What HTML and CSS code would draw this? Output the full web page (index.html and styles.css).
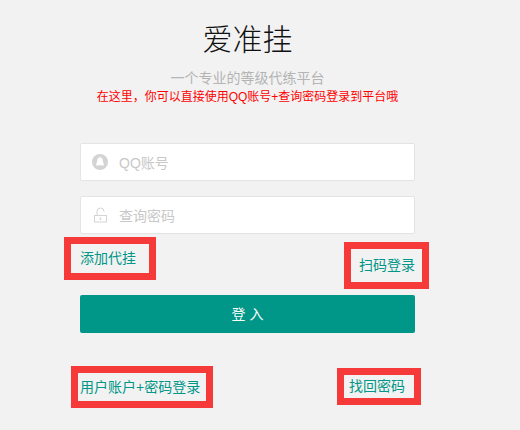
FILE: index.html
```html
<!DOCTYPE html>
<html lang="zh-CN">
<head>
    <meta charset="UTF-8">
    <meta name="viewport" content="width=device-width, initial-scale=1.0">
    <title>爱准挂</title>
    <link rel="stylesheet" href="styles.css">
</head>
<body>
    <div class="login">
        <h1 class="title">爱准挂</h1>
        <p class="subtitle">一个专业的等级代练平台</p>
        <p class="notice">在这里，你可以直接使用QQ账号+查询密码登录到平台哦</p>
        <div class="field first">
            <svg class="icon" width="16" height="16" viewBox="0 0 16 16">
                <circle cx="8" cy="8" r="8" fill="#d4d4d4"/>
                <path d="M8 3.200C6.300 3.200 5.400 4.600 5.300 6.200 5.200 7.800 4.200 9.300 4.200 11c0 .6.600.8 1.200.6.800-.3 1.600-.4 2.600-.4s1.800.1 2.600.4c.6.200 1.200 0 1.200-.6 0-1.700-1-3.200-1.100-4.800C10.600 4.600 9.700 3.200 8 3.200z" fill="#fff"/>
            </svg>
            <span class="placeholder">QQ账号</span>
        </div>
        <div class="field">
            <svg class="icon" width="16" height="16" viewBox="0 0 16 16" fill="none" stroke="#d4d4d4">
                <rect x="2.500" y="8.500" width="12" height="6.500"/>
                <path d="M5 8.500V4.500a3.500 3.500 0 0 1 7 0"/>
                <path d="M8.500 10.500v2.500" stroke-width="1.500"/>
            </svg>
            <span class="placeholder">查询密码</span>
        </div>
        <div class="links top">
            <a class="mark add">添加代挂</a>
            <a class="mark scan">扫码登录</a>
        </div>
        <button class="submit">登 入</button>
        <div class="links bottom">
            <a class="mark account">用户账户+密码登录</a>
            <a class="mark find">找回密码</a>
        </div>
    </div>
</body>
</html>
```

FILE: styles.css
```css
body{
    margin: 0;
    background: #f2f2f2;
    font-family: "Liberation Sans", "Noto Sans CJK SC", sans-serif;
}
.login{
    width: 335px;
    margin-left: 80px;
    padding-top: 13px;
}
.title{
    margin: 0;
    height: 48px;
    line-height: 48px;
    font-size: 30px;
    font-weight: 200;
    text-align: center;
    color: #111;
    font-family: "Noto Sans CJK SC", sans-serif;
}
.subtitle{
    margin: 7px 0 0;
    height: 20px;
    line-height: 20px;
    font-size: 14px;
    text-align: center;
    color: #b4b4b4;
}
.notice{
    margin: 0 -20px;
    height: 18px;
    line-height: 18px;
    font-size: 12px;
    text-align: center;
    color: #f00;
}
.field{
    height: 36px;
    margin-top: 15px;
    display: flex;
    align-items: center;
    background: #fff;
    border: 1px solid #e4e4e4;
    border-radius: 2px;
}
.field.first{
    margin-top: 37px;
}
.icon{
    margin-left: 11px;
}
.placeholder{
    margin-left: 11px;
    font-size: 14px;
    color: #c8c8c8;
}
.links{
    display: flex;
    justify-content: space-between;
    align-items: flex-start;
}
.links.top{
    height: 58px;
    margin: 3px -14px 0 -16px;
}
.links.bottom{
    margin: 33px -6px 0 -9px;
}
.mark{
    border: 7px solid #f63a3a;
    color: #009688;
    font-size: 14px;
}
.add{
    line-height: 29px;
    padding: 0 13px 0 9px;
}
.scan{
    margin-top: 5px;
    line-height: 33px;
    padding: 0 7px 0 8px;
}
.account{
    line-height: 28px;
    padding: 0 6px 0 2px;
}
.find{
    margin-top: 2px;
    line-height: 23px;
    padding: 0 9px 0 5px;
}
.submit{
    display: block;
    width: 100%;
    height: 38px;
    padding: 0 0 3px;
    border: 0;
    border-radius: 2px;
    background: #009688;
    color: #fff;
    font-size: 14px;
    font-family: inherit;
}
```
